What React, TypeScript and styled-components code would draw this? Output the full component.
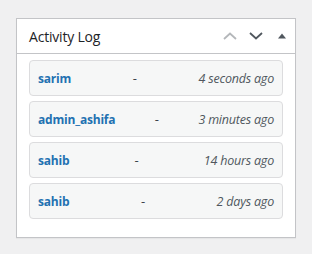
import styled, { createGlobalStyle } from "styled-components";

const GlobalStyle = createGlobalStyle`
  body {
    margin: 0;
    background: #f0f0f1;
    font-family: "Open Sans", "Noto Sans", sans-serif;
  }
`;

const Page = styled.div`
  padding: 18px 16px 16px 16px;
  width: 280px;
`;

const Postbox = styled.div`
  background: #fff;
  border: 1px solid #c3c4c7;
  box-shadow: 0 1px 1px rgba(0, 0, 0, 0.04);
`;

const Header = styled.div`
  display: flex;
  align-items: center;
  height: 35px;
  box-sizing: border-box;
  border-bottom: 1px solid #c3c4c7;
  padding-left: 12px;
`;

const Title = styled.h2`
  flex: 1;
  margin: 0;
  font-size: 14px;
  font-weight: 400;
  color: #1d2327;
  letter-spacing: -0.2px;
`;

const Actions = styled.div`
  display: flex;
  align-items: center;
`;

const ActionButton = styled.button<{ $w: number }>`
  width: ${(p) => p.$w}px;
  height: 34px;
  display: flex;
  align-items: center;
  justify-content: center;
  padding: 0;
  border: 0;
  background: none;
  cursor: pointer;
`;

const Inside = styled.div`
  display: flex;
  flex-direction: column;
  gap: 5px;
  padding: 6px 12px 18px 12px;
`;

const Item = styled.div`
  display: flex;
  align-items: center;
  justify-content: space-between;
  height: 34px;
  padding: 0 8px;
  background: #f6f7f7;
  border: 1px solid #dcdcde;
  border-radius: 4px;
`;

const User = styled.a`
  font-size: 12px;
  font-weight: 700;
  color: #2271b1;
  text-decoration: none;
  letter-spacing: -0.2px;
`;

const Dash = styled.span`
  font-size: 13px;
  color: #3c434a;
`;

const Time = styled.span`
  font-size: 12.5px;
  font-style: italic;
  color: #50575e;
  letter-spacing: -0.2px;
`;

const entries = [
  { user: "sarim", time: "4 seconds ago" },
  { user: "admin_ashifa", time: "3 minutes ago" },
  { user: "sahib", time: "14 hours ago" },
  { user: "sahib", time: "2 days ago" },
];

export default function App() {
  return (
    <>
      <GlobalStyle />
      <Page>
        <Postbox>
          <Header>
            <Title>Activity Log</Title>
            <Actions>
              <ActionButton $w={26} aria-label="Move up">
                <svg width="14" height="8" viewBox="0 0 14 8">
                  <path d="M1 7 L7 1.5 L13 7" fill="none" stroke="#b4b7ba" strokeWidth="1.8" />
                </svg>
              </ActionButton>
              <ActionButton $w={26} aria-label="Move down">
                <svg width="14" height="8" viewBox="0 0 14 8">
                  <path d="M1 1 L7 6.5 L13 1" fill="none" stroke="#50575e" strokeWidth="1.8" />
                </svg>
              </ActionButton>
              <ActionButton $w={26} aria-label="Toggle panel">
                <svg width="8" height="6" viewBox="0 0 8 6">
                  <path d="M0 5.5 L4 0.5 L8 5.5 Z" fill="#50575e" />
                </svg>
              </ActionButton>
            </Actions>
          </Header>
          <Inside>
            {entries.map((e, i) => (
              <Item key={i}>
                <User href="#">{e.user}</User>
                <Dash>-</Dash>
                <Time>{e.time}</Time>
              </Item>
            ))}
          </Inside>
        </Postbox>
      </Page>
    </>
  );
}
